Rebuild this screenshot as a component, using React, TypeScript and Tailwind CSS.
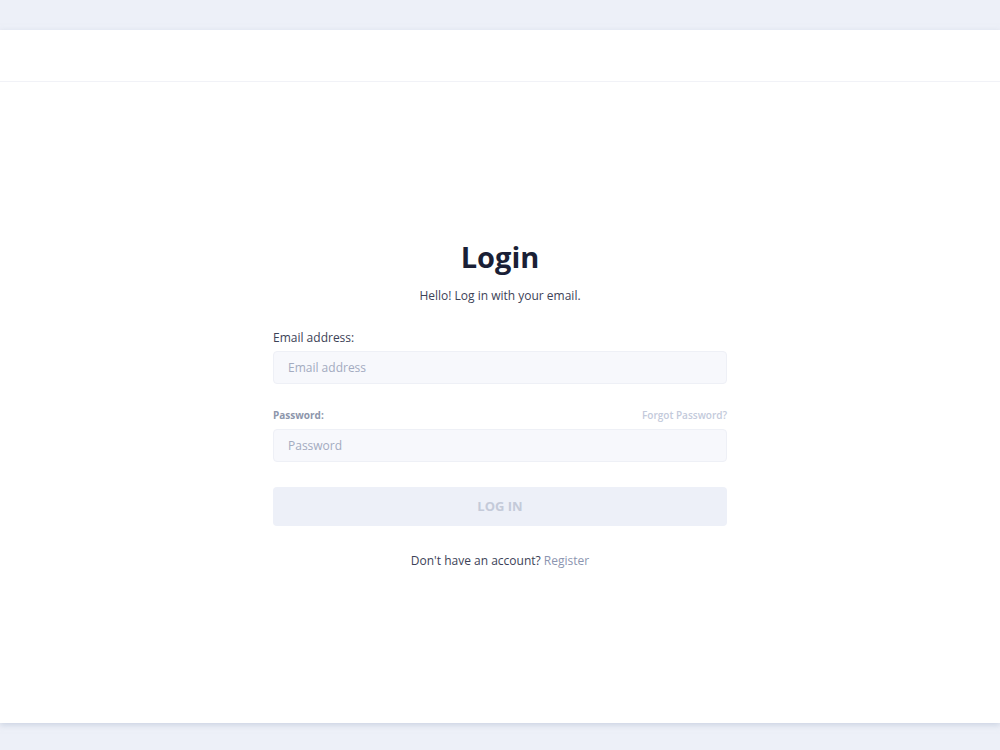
import React, { useState } from 'react';

const App: React.FC = () => {
  const [email, setEmail] = useState('');
  const [password, setPassword] = useState('');

  const canSubmit = email.trim() !== '' && password !== '';

  return (
    <div
      className="min-h-screen w-full bg-[#edf0f8] pt-[30px] pb-[27px] flex flex-col"
      style={{ fontFamily: '"Open Sans", "Noto Sans", sans-serif' }}
    >
      <div className="flex flex-1 flex-col bg-white shadow-[0_2px_6px_rgba(180,190,210,0.6)]">
        {/* top bar */}
        <header className="h-[52px] border-b border-[#f1f2f7]" />

        {/* login form */}
        <main className="flex flex-1 items-start justify-center pt-[157px]">
          <form
            className="flex w-[454px] flex-col"
            onSubmit={(e) => e.preventDefault()}
          >
            <h1 className="text-center text-[29px] font-bold leading-[36px] text-[#1a1f36]">
              Login
            </h1>
            <p className="mt-[12px] text-center text-[12px] leading-[18px] text-[#3c4257]">
              Hello! Log in with your email.
            </p>

            <label className="mt-[24px] text-[12px] leading-[18px] text-[#3c4257]">
              Email address:
            </label>
            <input
              type="email"
              value={email}
              onChange={(e) => setEmail(e.target.value)}
              placeholder="Email address"
              className="mt-[4px] h-[33px] rounded-[4px] border border-[#eef0f6] bg-[#f7f8fc] px-[14px] text-[12px] text-[#3c4257] outline-none placeholder:text-[#a3abc0]"
            />

            <div className="mt-[24px] flex items-center justify-between">
              <span className="text-[10px] font-bold leading-[14px] text-[#8d96ab]">
                Password:
              </span>
              <a href="#" className="text-[10px] font-semibold leading-[14px] text-[#c3cadb]">
                Forgot Password?
              </a>
            </div>
            <input
              type="password"
              value={password}
              onChange={(e) => setPassword(e.target.value)}
              placeholder="Password"
              className="mt-[7px] h-[33px] rounded-[4px] border border-[#eef0f6] bg-[#f7f8fc] px-[14px] text-[12px] text-[#3c4257] outline-none placeholder:text-[#a3abc0]"
            />

            <button
              type="submit"
              disabled={!canSubmit}
              className="mt-[25px] h-[39px] rounded-[4px] bg-[#edf0f8] text-[13px] font-bold text-[#c4cad9]"
            >
              LOG IN
            </button>

            <p className="mt-[26px] text-center text-[12px] leading-[18px] text-[#3c4257]">
              Don't have an account?{' '}
              <a href="#" className="text-[#8c95b0]">
                Register
              </a>
            </p>
          </form>
        </main>
      </div>
    </div>
  );
};

export default App;
